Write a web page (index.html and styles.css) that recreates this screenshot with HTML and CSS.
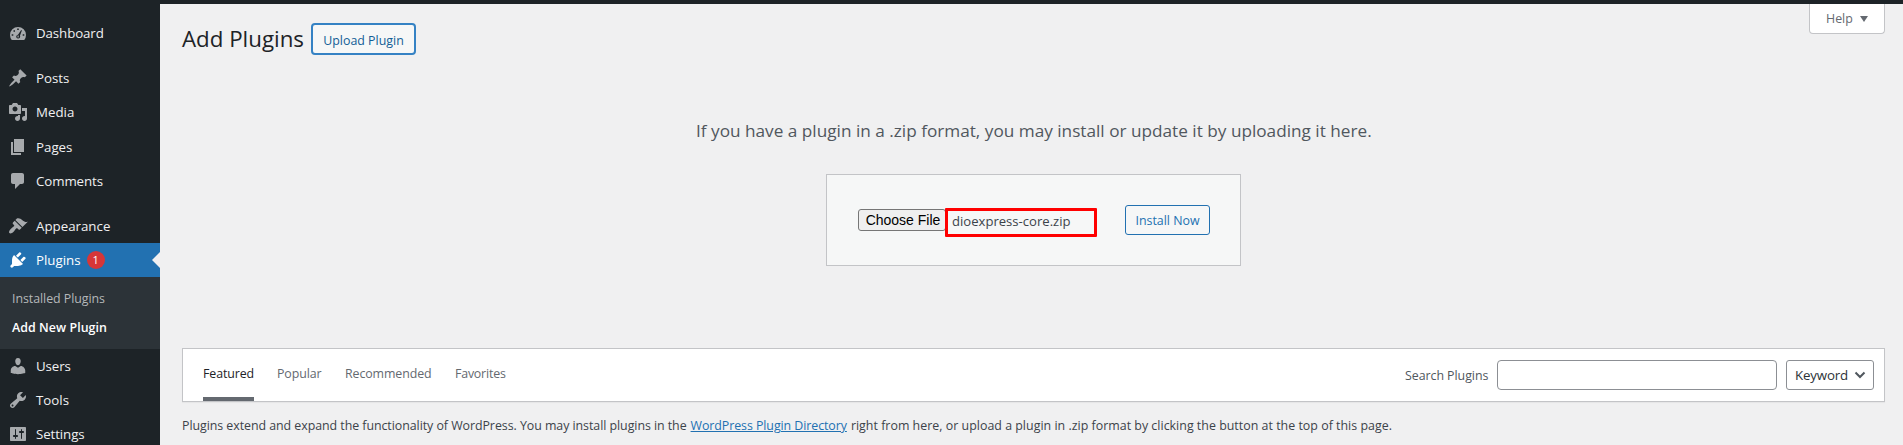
FILE: index.html
```html
<!DOCTYPE html>
<html lang="en">
<head>
<meta charset="utf-8">
<title>Add Plugins</title>
<link rel="stylesheet" href="styles.css">
</head>
<body>
<div class="layout">
  <nav class="sidebar">
    <a class="item"><svg class="icon" viewBox="0 0 20 20"><path fill-rule="evenodd" d="M3.76 17h12.480A8 8 0 0 0 18 12 8 8 0 0 0 2 12a8 8 0 0 0 1.760 5zM9.200 5.500h1.600v1.600H9.200zM5.500 7.200h1.500v1.500H5.500zM3.700 11.200h1.600v1.600H3.700zM14.700 11.200h1.600v1.600h-1.600zM13.200 7l.7.5-1.900 5.100c.6 1.800-.4 2.900-1.900 2.900-1.500 0-2.400-1.400-1.600-2.700.4-.6 1-.9 1.500-1zM9.500 12.600h1.200v1.800H9.500z"/></svg><span class="label dashboard">Dashboard</span></a>
    <div class="gap"></div>
    <a class="item"><svg class="icon" viewBox="0 0 20 20"><path d="M10.44 3.02l1.82-1.82 6.36 6.35-1.83 1.82c-1.05-.68-2.48-.57-3.41.36l-.75.75c-.92.93-1.04 2.35-.35 3.41l-1.83 1.82-2.41-2.41-2.8 2.79c-.42.42-3.38 2.71-3.8 2.29s1.86-3.39 2.28-3.81l2.79-2.79L4.1 9.36l1.83-1.82c1.05.69 2.48.57 3.4-.36l.75-.75c.93-.92 1.05-2.35.36-3.41z"/></svg><span class="label posts">Posts</span></a>
    <a class="item"><svg class="icon" viewBox="0 0 20 20"><path d="M13 11V4c0-.55-.45-1-1-1h-1.67L9 1H5L3.67 3H2c-.55 0-1 .45-1 1v7c0 .55.45 1 1 1h10c.55 0 1-.45 1-1zM7 4.5c1.38 0 2.5 1.12 2.5 2.5S8.380 9.500 7 9.500 4.500 8.380 4.500 7 5.620 4.500 7 4.500zM14 6h5v10.500c0 1.380-1.120 2.500-2.500 2.500S14 17.880 14 16.500s1.120-2.500 2.500-2.500c.17 0 .34.02.5.05V9h-3V6zm-4 8.050V13h2v3.500c0 1.380-1.120 2.500-2.500 2.500S7 17.880 7 16.500 8.120 14 9.500 14c.17 0 .34.02.5.05z"/></svg><span class="label media">Media</span></a>
    <a class="item"><svg class="icon" viewBox="0 0 20 20"><path d="M6 15V2h10v13H6zm-1 1h8v2H3V5h2v11z"/></svg><span class="label pages">Pages</span></a>
    <a class="item"><svg class="icon" viewBox="0 0 20 20"><path d="M5 2h9c1.1 0 2 .9 2 2v7c0 1.1-.9 2-2 2h-2l-5 5v-5H5c-1.100 0-2-.9-2-2V4c0-1.100.9-2 2-2z"/></svg><span class="label comments">Comments</span></a>
    <div class="gap"></div>
    <a class="item"><svg class="icon" viewBox="0 0 20 20"><path d="M14.48 11.06L7.41 3.99l1.5-1.5c.5-.56 2.3-.47 3.51.32 1.21.8 1.43 1.28 2.91 2.1 1.18.64 2.45 1.26 4.45.85zm-.71.71L6.7 4.7 4.93 6.47c-.39.39-.39 1.02 0 1.41l1.06 1.06c.39.39.39 1.03 0 1.42-.6.6-1.43 1.11-2.21 1.69-.35.26-.7.53-1.01.84C1.43 14.23.4 16.08 1.4 17.07c.99 1 2.84-.03 4.18-1.36.31-.31.58-.66.85-1.02.57-.78 1.08-1.61 1.69-2.21.39-.39 1.02-.39 1.41 0l1.06 1.06c.39.39 1.02.39 1.41 0z"/></svg><span class="label appearance">Appearance</span></a>
    <a class="item current"><svg class="icon" viewBox="0 0 20 20"><path d="M13.11 4.36L9.87 7.6 8 5.73l3.24-3.24c.35-.34 1.05-.2 1.56.32.52.51.66 1.21.31 1.55zm-8 1.77l.91-1.12 9.01 9.01-1.19.84c-.71.71-2.63 1.16-3.82 1.16H6.14L4.9 17.26c-.59.59-1.54.59-2.12 0-.59-.58-.59-1.53 0-2.12l1.24-1.24v-3.88c0-1.13.4-3.19 1.09-3.89zm7.26 3.97l3.24-3.24c.34-.35 1.04-.21 1.55.31.52.51.66 1.21.31 1.55l-3.24 3.25z"/></svg><span class="label plugins">Plugins</span><span class="count">1</span></a>
    <div class="submenu">
      <a class="sub installed">Installed Plugins</a>
      <a class="sub active">Add New Plugin</a>
    </div>
    <a class="item lower"><svg class="icon" viewBox="0 0 20 20"><path d="M10 9.25c-2.27 0-2.73-3.44-2.73-3.44C7 4.02 7.82 2 9.97 2c2.16 0 2.98 2.02 2.71 3.81 0 0-.41 3.44-2.68 3.44zm0 2.57L12.72 10c2.39 0 4.52 2.33 4.52 4.53v2.49s-3.65 1.13-7.24 1.13c-3.65 0-7.24-1.13-7.24-1.13v-2.49c0-2.25 1.94-4.48 4.47-4.48z"/></svg><span class="label users">Users</span></a>
    <a class="item lower"><svg class="icon" viewBox="0 0 20 20"><path d="M16.68 9.77c-1.34 1.34-3.3 1.67-4.95.99l-5.41 6.52c-.99.99-2.59.99-3.58 0s-.99-2.59 0-3.57l6.52-5.42c-.68-1.65-.35-3.61.99-4.95 1.28-1.28 3.12-1.62 4.72-1.06l-2.89 2.89 2.82 2.82 2.86-2.87c.53 1.58.18 3.39-1.08 4.65zM3.81 16.21c.4.39 1.04.39 1.43 0 .4-.4.4-1.04 0-1.43-.39-.4-1.03-.4-1.43 0-.39.39-.39 1.03 0 1.43z"/></svg><span class="label tools">Tools</span></a>
    <a class="item lower"><svg class="icon" viewBox="0 0 20 20"><path d="M18 16V4c0-.55-.45-1-1-1H3c-.55 0-1 .45-1 1v12c0 .55.45 1 1 1h14c.55 0 1-.45 1-1zM8 11h1c.55 0 1 .45 1 1s-.45 1-1 1H8v1.500c0 .28-.22.5-.5.5s-.5-.22-.5-.5V13H6c-.55 0-1-.45-1-1s.45-1 1-1h1V5.500c0-.28.22-.5.5-.5s.5.22.5.5V11zm5-2h-1c-.55 0-1-.45-1-1s.45-1 1-1h1V5.500c0-.28.22-.5.5-.5s.5.22.5.5V7h1c.55 0 1 .45 1 1s-.45 1-1 1h-1v5.500c0 .28-.22.5-.5.5s-.5-.22-.5-.5V9z"/></svg><span class="label settings">Settings</span></a>
  </nav>
  <main class="content">
    <header class="head">
      <h1 class="title">Add Plugins</h1>
      <a class="upload">Upload Plugin</a>
      <a class="help"><span>Help</span><i class="triangle"></i></a>
    </header>
    <p class="intro">If you have a plugin in a .zip format, you may install or update it by uploading it here.</p>
    <form class="upload-form">
      <button class="choose" type="button">Choose File</button>
      <span class="file">dioexpress-core.zip</span>
      <button class="install" type="button">Install Now</button>
    </form>
    <section class="filter">
      <a class="tab featured">Featured</a>
      <a class="tab popular">Popular</a>
      <a class="tab recommended">Recommended</a>
      <a class="tab favorites">Favorites</a>
      <span class="search-label">Search Plugins</span>
      <input class="search" type="text" aria-label="Search Plugins">
      <div class="select"><span>Keyword</span><svg class="chevron" viewBox="0 0 12 8"><path d="M1.500 1.500L6 6l4.500-4.500"/></svg></div>
    </section>
    <p class="about"><span class="about-a">Plugins extend and expand the functionality of WordPress. You may install plugins in the</span> <a class="link">WordPress Plugin Directory</a> <span class="about-b">right from here, or upload a plugin in .zip format by clicking the button at the top of this page.</span></p>
  </main>
</div>
</body>
</html>
```
FILE: styles.css
```css
* { box-sizing: border-box; }
body {
  margin: 0;
  height: 445px;
  overflow: hidden;
  background: #f0f0f1;
  color: #3c434a;
  font-family: "Open Sans", "Noto Sans", sans-serif;
  font-size: 12.4px;
  white-space: nowrap;
}
.layout { display: flex; height: 445px; border-top: 4px solid #1d2327; }
.sidebar { width: 160px; height: 441px; padding-top: 12px; background: #1d2327; overflow: hidden; flex: none; }
.item { display: flex; align-items: center; height: 34.3px; padding-left: 8px; color: #f0f0f1; font-size: 13.3px; line-height: 18px; position: relative; }
.lower { height: 34px; }
.icon { width: 20px; height: 20px; fill: #a7aaad; margin-right: 8px; flex: none; }
.gap { height: 10.6px; }
.dashboard, .comments, .settings, .users { letter-spacing: -.1px; }
.current { background: #2271b1; color: #fff; }
.current .icon { fill: #fff; }
.current::after { content: ""; position: absolute; right: 0; top: 9px; border: 8px solid transparent; border-left: 0; border-right-color: #f0f0f1; }
.count { width: 18px; height: 18px; border-radius: 9px; margin-left: 6px; background: #d63638; color: #fff; font-size: 11px; line-height: 18px; text-align: center; }
.submenu { height: 71.500px; padding: 7px 12px; background: #2c3338; }
.sub { display: block; height: 29px; line-height: 29px; color: #b5b8ba; }
.installed { letter-spacing: -.05px; }
.active { color: #fff; font-weight: 600; letter-spacing: .06px; }
.content { flex: 1; padding-left: 22px; }
.head { display: flex; height: 66px; align-items: flex-start; }
.title { margin: 17px 8px 0 0; width: 121px; font-size: 22.300px; font-weight: 400; line-height: 36px; color: #1d2327; }
.upload { width: 105px; height: 32px; margin-top: 19px; border: 2px solid #3582c4; border-radius: 4px; background: #f6f7f7; color: #135e96; line-height: 29px; padding-top: 1px; text-align: center; }
.help { display: flex; align-items: center; width: 76px; height: 30px; margin-left: auto; margin-right: 18px; padding-left: 16px; border: 1px solid #c3c4c7; border-top: 0; border-radius: 0 0 4px 4px; background: #fff; color: #646970; }
.triangle { border: 4px solid transparent; border-top: 6px solid #646970; border-bottom: 0; margin-left: 7px; }
.intro { width: 675px; margin: 46px 0 0 514px; font-size: 17.200px; line-height: 30px; color: #50575e; }
.upload-form { display: flex; width: 415px; height: 92px; margin: 28px 0 0 644px; border: 1px solid #c3c4c7; background: #f6f7f7; }
.choose { width: 88px; height: 22px; margin: 34px 0 0 31px; padding: 0 0 0 2px; border: 1px solid #767676; border-radius: 3px; background: #efefef; color: #000; font: 14px/18px "Liberation Sans", sans-serif; }
.file { width: 152px; height: 29px; margin: 33px 28px 0 -1px; padding-left: 4px; border: 3px solid #f00; border-radius: 1px; font-size: 13.100px; line-height: 20px; position: relative; background: #f6f7f7; }
.install { width: 85px; height: 30px; margin-top: 30px; padding: 1px 0 0; border: 1px solid #2271b1; border-radius: 3px; background: #f6f7f7; color: #2271b1; font: inherit; line-height: 27px; }
.filter { display: flex; width: 1703px; height: 54px; margin-top: 82px; padding-left: 20px; border: 1px solid #c3c4c7; background: #fff; box-shadow: 0 1px 1px rgba(0,0,0,.04); }
.tab { height: 52px; line-height: 49px; color: #646970; margin-right: 23px; }
.featured { width: 51px; color: #1d2327; border-bottom: 4px solid #646970; letter-spacing: -.1px; }
.popular { width: 45px; letter-spacing: -.1px; }
.recommended { width: 87px; letter-spacing: -.1px; }
.favorites { letter-spacing: -.2px; }
.search-label { width: 92px; margin-left: auto; line-height: 53px; color: #50575e; letter-spacing: -.05px; }
.search { width: 280px; height: 30px; margin-top: 11px; padding: 0 8px; border: 1px solid #8c8f94; border-radius: 4px; background: #fff; }
.select { display: flex; align-items: center; width: 88px; height: 30px; margin: 11px 10px 0 9px; padding-left: 8px; border: 1px solid #8c8f94; border-radius: 3px; color: #2c3338; font-size: 13.300px; letter-spacing: -.15px; }
.chevron { width: 12px; height: 8px; margin-left: 6px; fill: none; stroke: #50575e; stroke-width: 2; }
.about { display: flex; gap: 4px; margin: 14px 0 0; line-height: 20px; }
.about-a { letter-spacing: -.05px; }
.about-b { letter-spacing: .02px; }
.link { color: #2271b1; text-decoration: underline; letter-spacing: -.07px; }
```
